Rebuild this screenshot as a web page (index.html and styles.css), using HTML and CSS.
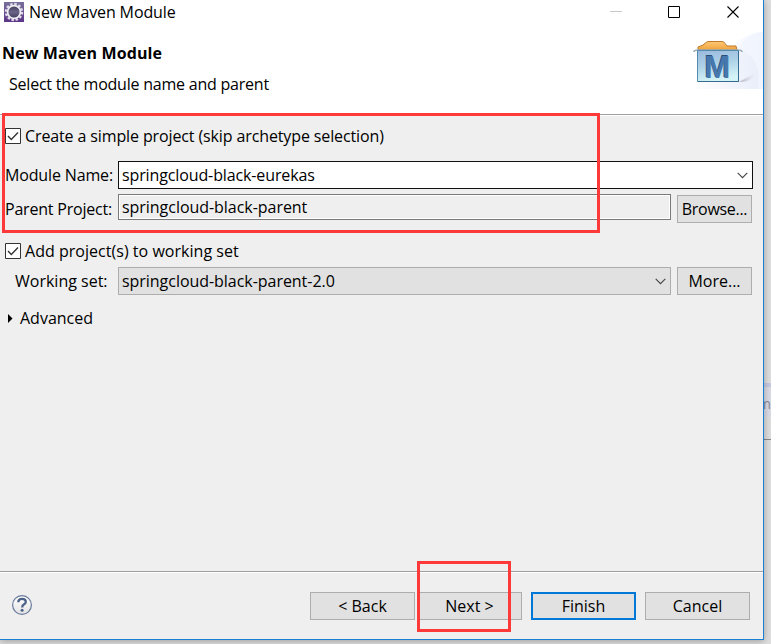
FILE: index.html
```html
<!DOCTYPE html>
<html lang="en">
<head>
<meta charset="utf-8">
<title>New Maven Module</title>
<link rel="stylesheet" href="styles.css">
</head>
<body>
<div class="desktop">
  <main class="dialog">
    <div class="titlebar">
      <svg class="app-icon" width="20" height="20" viewBox="0 0 20 20">
        <defs><linearGradient id="ecl" x1="0" y1="0" x2="0" y2="1"><stop offset="0" stop-color="#77709b"/><stop offset="1" stop-color="#5c3489"/></linearGradient>
        <linearGradient id="orb" x1="0" y1="0" x2="0" y2="1"><stop offset="0" stop-color="#3d3757"/><stop offset=".5" stop-color="#6b6689"/><stop offset="1" stop-color="#40395d"/></linearGradient></defs>
        <rect width="20" height="20" fill="url(#ecl)"/>
        <circle cx="10" cy="10" r="8" fill="none" stroke="#dedbe7" stroke-width="2.4" stroke-dasharray="2.5 1.69"/>
        <circle cx="10" cy="10" r="6.4" fill="url(#orb)" stroke="#efedf3" stroke-width="1.7"/>
      </svg>
      <span class="t-title">New Maven Module</span>
      <svg class="controls" width="130" height="14" viewBox="0 0 130 14" fill="none">
        <path d="M0 6.5H12" stroke="#c9c9c9"/>
        <path d="M58.5 1.5H69.5V12.5H58.5Z" stroke="#000"/>
        <path d="M117.5 1.5L128.5 12.5M128.5 1.5L117.5 12.5" stroke="#000" stroke-width="1.1"/>
      </svg>
    </div>
    <header class="banner">
      <div class="banner-text">
        <h1 class="t-heading">New Maven Module</h1>
        <p class="t-sub">Select the module name and parent</p>
      </div>
      <svg class="banner-art" width="75" height="64" viewBox="0 0 75 64">
        <defs>
          <linearGradient id="swoosh" x1="0" y1="0" x2="1" y2="0"><stop offset="0" stop-color="#fff"/><stop offset="1" stop-color="#e8edf9"/></linearGradient>
          <linearGradient id="box" x1="0" y1="0" x2=".25" y2="1"><stop offset="0" stop-color="#9bb9de"/><stop offset=".5" stop-color="#add1e7"/><stop offset="1" stop-color="#d4f3f6"/></linearGradient>
          <linearGradient id="folder" x1="0" y1="0" x2="0" y2="1"><stop offset="0" stop-color="#ffc875"/><stop offset="1" stop-color="#eda33e"/></linearGradient>
          <linearGradient id="shade" x1="0" y1="0" x2="1" y2="0"><stop offset="0" stop-color="#aaa6b8"/><stop offset="1" stop-color="#e9ebf5" stop-opacity="0"/></linearGradient>
        </defs>
        <path d="M0 64Q35 49 51 22Q59 8 75 7V64Z" fill="url(#swoosh)"/>
        <path d="M42 24Q75 25 70 64H75V7Q57 7 42 24Z" fill="#f5f8ff" opacity=".65"/>
        <path d="M51 57L69 47Q66 57 51 57Z" fill="url(#shade)"/>
        <path d="M10 25V22L15 20L18 17.5Q19 16.5 21 16.5H34Q36 16.5 37 18.5L39 21H48L49 25Z" fill="url(#folder)" stroke="#bf7929"/>
        <path d="M6 27Q6 25 10 25H50Q54 25 54 27" fill="none" stroke="#9faeb8" stroke-width="1.7"/>
        <path d="M9.5 25.5H50.5V56.5H9.5Z" fill="url(#box)" stroke="#528bad"/>
        <path d="M50.5 26V56.5H10" fill="none" stroke="#356b8e"/>
        <text class="maven-shadow" x="28.7" y="52">M</text>
        <text class="maven" x="29.5" y="52.5">M</text>
      </svg>
    </header>
    <section class="form">
      <label class="check-row">
        <svg class="check" width="16" height="16" viewBox="0 0 16 16"><path d="M.5.5h15v15H.5z" fill="#fff" stroke="#333"/><path d="M3 8L6.3 11.4L13 4.6" fill="none" stroke="#333" stroke-width="1.4"/></svg>
        <span class="t-create">Create a simple project (skip archetype selection)</span>
      </label>
      <div class="row module-row">
        <span class="label"><span class="t-module">Module Name:</span></span>
        <div class="combo editable"><span class="t-eurekas">springcloud-black-eurekas</span>
          <svg class="arrow" width="11" height="7" viewBox="0 0 11 7"><path d="M.7.8L5.5 5.6L10.3.8" fill="none" stroke="#444" stroke-width="1.1"/></svg></div>
      </div>
      <div class="row parent-row">
        <span class="label"><span class="t-parent">Parent Project:</span></span>
        <div class="readonly"><span class="t-parentval">springcloud-black-parent</span></div>
        <div class="btn side"><span class="t-browse">Browse...</span></div>
      </div>
      <label class="check-row second">
        <svg class="check" width="16" height="16" viewBox="0 0 16 16"><path d="M.5.5h15v15H.5z" fill="#fff" stroke="#333"/><path d="M3 8L6.3 11.4L13 4.6" fill="none" stroke="#333" stroke-width="1.4"/></svg>
        <span class="t-add">Add project(s) to working set</span>
      </label>
      <div class="row set-row">
        <span class="label indented"><span class="t-working">Working set:</span></span>
        <div class="combo disabled"><span class="t-set">springcloud-black-parent-2.0</span>
          <svg class="arrow" width="11" height="7" viewBox="0 0 11 7"><path d="M.7.8L5.5 5.6L10.3.8" fill="none" stroke="#444" stroke-width="1.1"/></svg></div>
        <div class="btn side"><span class="t-more">More...</span></div>
      </div>
      <div class="advanced">
        <svg width="5" height="9" viewBox="0 0 5 9"><path d="M0 0L4.5 4.5L0 9Z" fill="#000"/></svg>
        <span class="t-adv">Advanced</span>
      </div>
    </section>
    <footer class="footer">
      <svg class="help" width="22" height="22" viewBox="0 0 22 22">
        <defs><linearGradient id="hg" x1="0" y1="0" x2="0" y2="1"><stop offset="0" stop-color="#fff"/><stop offset="1" stop-color="#e3e3e3"/></linearGradient></defs>
        <circle cx="11" cy="11" r="9.4" fill="url(#hg)" stroke="#687b9c" stroke-width="1.2"/>
        <path d="M7.3 8.2Q7.3 4.8 11 4.8Q14.8 4.8 14.8 7.8Q14.8 9.5 12.8 10.5Q11.2 11.4 11.2 13.4" fill="none" stroke="#4d6289" stroke-width="2.3"/>
        <circle cx="11.1" cy="16.3" r="1.5" fill="#4d6289"/>
      </svg>
      <div class="buttons">
        <div class="btn"><span class="t-back">&lt; Back</span></div>
        <div class="btn next"><span class="t-next">Next &gt;</span></div>
        <div class="btn primary"><span class="t-finish">Finish</span></div>
        <div class="btn"><span class="t-cancel">Cancel</span></div>
      </div>
    </footer>
  </main>
  <aside class="behind"><div class="behind-tab"><span>m</span></div><div class="behind-line"></div></aside>
  <div class="mark mark-form"></div>
  <div class="mark mark-next"></div>
</div>
</body>
</html>
```
FILE: styles.css
```css
* { box-sizing: border-box; }
body { margin: 0; font: 16px/20px "Open Sans", "Noto Sans", sans-serif; color: #000; }
.desktop { position: relative; display: flex; width: 771px; height: 644px; overflow: hidden; background: #dedede; }
.dialog { position: relative; z-index: 1; width: 764px; height: 640px; border: solid #1a7fd0; border-width: 0 1px 1px 0; background: #efefef; box-shadow: 0 1px 7px rgba(0, 0, 0, .3); }
.dialog span, .t-heading, .t-sub { white-space: nowrap; }
.titlebar { display: flex; align-items: center; height: 25px; padding-left: 4px; background: #fff; }
.app-icon { margin-top: -1px; }
.t-title { margin: -1px 0 0 5px; letter-spacing: -.12px; }
.controls { margin: -1px 23px 0 auto; }
.banner { display: flex; justify-content: space-between; height: 91px; background: #fff; border-bottom: 1px solid #fff; box-shadow: inset 0 -1px #a0a0a0; }
.banner-text { padding: 18px 0 0 2px; }
.t-heading { margin: 0; font-size: 16px; line-height: 20px; font-weight: 700; letter-spacing: .12px; }
.t-sub { margin: 11px 0 0 7px; letter-spacing: -.22px; }
.maven, .maven-shadow { font: bold 31px "Liberation Sans", sans-serif; text-anchor: middle; fill: #4778ad; }
.maven-shadow { fill: #284e7b; }
.form { height: 455px; padding-top: 10px; }
.check-row { display: flex; gap: 4px; align-items: center; height: 20px; margin-left: 5px; }
.t-create { letter-spacing: -.12px; }
.t-module { letter-spacing: -.15px; }
.t-eurekas { letter-spacing: -.12px; }
.t-parent { letter-spacing: -.2px; }
.t-parentval, .t-set { letter-spacing: -.04px; }
.t-browse { letter-spacing: -.3px; }
.t-add { letter-spacing: .03px; }
.row { display: flex; }
.label { width: 113px; height: 28px; display: flex; align-items: center; margin-left: 5px; }
.module-row { margin-top: 15px; }
.combo { display: flex; align-items: center; justify-content: space-between; height: 28px; padding: 0 4px 0 3px; }
.editable { width: 635px; border: 1px solid #111; background: #fff; }
.disabled { width: 553px; border: 1px solid #adadad; background: #e1e1e1; }
.parent-row { margin-top: 5px; }
.parent-row .label { padding-top: 2px; }
.readonly { width: 553px; height: 26px; padding: 0 3px; border: 1px solid #7a7a7a; box-shadow: inset 0 0 0 1px #fff; display: flex; align-items: center; }
.btn { display: flex; align-items: center; justify-content: center; width: 105px; height: 28px; border: 1px solid #adadad; background: #e1e1e1; }
.side { width: 75px; margin-left: 6px; }
.parent-row .side { margin-top: 1px; }
.second { margin-top: 18px; }
.set-row { margin-top: 6px; }
.indented { padding-left: 10px; }
.advanced { display: flex; align-items: center; gap: 7px; margin: 13px 0 0 8px; }
.footer { display: flex; height: 68px; padding: 20px 13px 0 11px; border-top: 1px solid #a0a0a0; box-shadow: inset 0 1px #fff; justify-content: space-between; }
.help { margin-top: 2px; }
.buttons { display: flex; }
.btn + .btn { margin-left: 9px; }
.btn.next { margin-left: 2px; }
.primary { border: 2px solid #0078d7; }
.behind { width: 7px; padding-top: 383px; color: #8a8a9c; }
.behind-tab { height: 34px; border-top: 4px solid #c5cae2; background: #dadbe5; padding-top: 7px; font-size: 14px; letter-spacing: -1px; }
.behind-tab span { margin-left: -6px; }
.behind-line { height: 23px; border-bottom: 1px solid #888; }
.mark { position: absolute; z-index: 2; border: 3px solid #fd3939; }
.mark-form { left: 2px; top: 113px; width: 598px; height: 120px; }
.mark-next { left: 417px; top: 561px; width: 94px; height: 71px; }
```
